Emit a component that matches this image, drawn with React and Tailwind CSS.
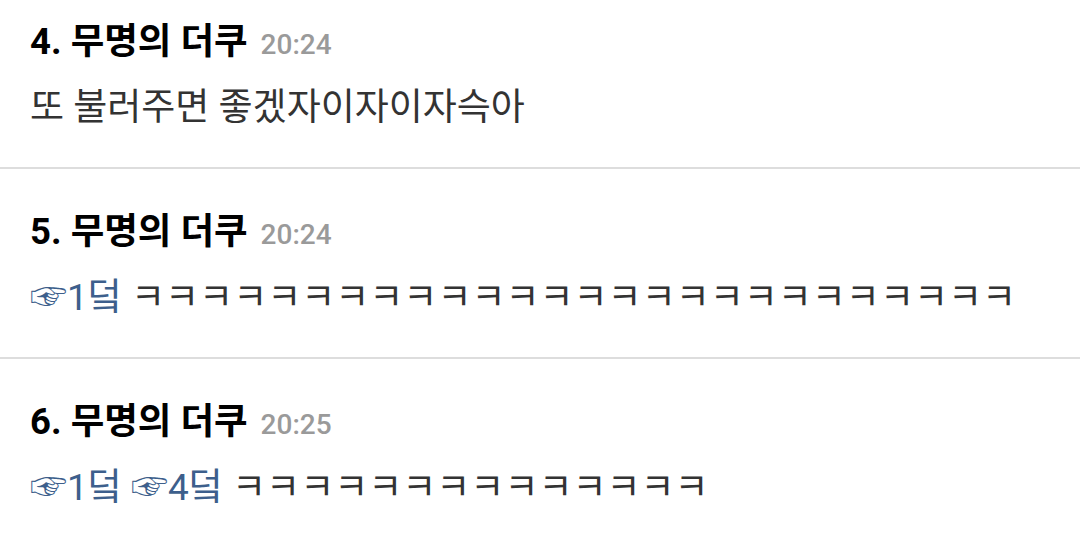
const comments = [
  { no: 4, name: "무명의 더쿠", time: "20:24", refs: [], text: "또 불러주면 좋겠자이자이자슥아" },
  { no: 5, name: "무명의 더쿠", time: "20:24", refs: [1], text: "ㅋ".repeat(26) },
  { no: 6, name: "무명의 더쿠", time: "20:25", refs: [1, 4], text: "ㅋ".repeat(14) },
];

function Comment({ c, last }) {
  return (
    <div className={`px-[30px] pt-[39px] pb-[35px] ${last ? "" : "border-b-2 border-[#dddddd]"}`}>
      <div className="flex items-baseline gap-[13px] leading-[48px]">
        <span className="text-[36.5px] font-bold text-black">
          {c.no}. {c.name}
        </span>
        <span className="text-[28px] font-medium text-[#9a9a9a]">{c.time}</span>
      </div>
      <p className="mt-[15px] text-[37px] leading-[48px] text-[#333333] whitespace-nowrap">
        {c.refs.map((r) => (
          <span key={r} className="text-[#3d5f8c]">
            ☞{r}덬{" "}
          </span>
        ))}
        {c.text}
      </p>
    </div>
  );
}

export default function App() {
  return (
    <div
      className="w-[1080px] h-[534px] bg-white overflow-hidden"
      style={{ fontFamily: 'Roboto, "Noto Sans CJK KR", sans-serif' }}
    >
      <div className="-mt-[21px]">
        {comments.map((c, i) => (
          <Comment key={c.no} c={c} last={i === comments.length - 1} />
        ))}
      </div>
    </div>
  );
}
